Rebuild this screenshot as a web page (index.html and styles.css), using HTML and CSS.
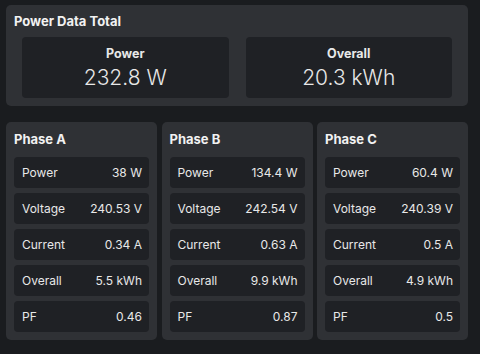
FILE: index.html
```html
<!DOCTYPE html>
<html lang="en">
<head>
    <meta charset="UTF-8">
    <title>Power Data</title>
    <link rel="stylesheet" href="styles.css">
</head>
<body>
<section class="card total">
    <h3 class="card-title">Power Data Total</h3>
    <div class="totals">
        <div class="stat">
            <div class="stat-name">Power</div>
            <div class="stat-value">232.8 W</div>
        </div>
        <div class="stat">
            <div class="stat-name">Overall</div>
            <div class="stat-value">20.3 kWh</div>
        </div>
    </div>
</section>

<div class="phases">
    <section class="card phase">
        <h3 class="card-title">Phase A</h3>
        <div class="row"><span>Power</span><span>38 W</span></div>
        <div class="row"><span>Voltage</span><span>240.53 V</span></div>
        <div class="row"><span>Current</span><span>0.34 A</span></div>
        <div class="row"><span>Overall</span><span>5.5 kWh</span></div>
        <div class="row"><span>PF</span><span>0.46</span></div>
    </section>
    <section class="card phase">
        <h3 class="card-title">Phase B</h3>
        <div class="row"><span>Power</span><span>134.4 W</span></div>
        <div class="row"><span>Voltage</span><span>242.54 V</span></div>
        <div class="row"><span>Current</span><span>0.63 A</span></div>
        <div class="row"><span>Overall</span><span>9.9 kWh</span></div>
        <div class="row"><span>PF</span><span>0.87</span></div>
    </section>
    <section class="card phase">
        <h3 class="card-title">Phase C</h3>
        <div class="row"><span>Power</span><span>60.4 W</span></div>
        <div class="row"><span>Voltage</span><span>240.39 V</span></div>
        <div class="row"><span>Current</span><span>0.5 A</span></div>
        <div class="row"><span>Overall</span><span>4.9 kWh</span></div>
        <div class="row"><span>PF</span><span>0.5</span></div>
    </section>
</div>
</body>
</html>
```

FILE: styles.css
```css
body {
    margin: 0;
    padding: 5px 12px 0 6px;
    background-color: #1a1c1f;
    font-family: Inter, "Noto Sans", sans-serif;
    color: #e8e8e8;
}

.card {
    background-color: #2f3135;
    border-radius: 5px;
    padding: 8px;
}

.card-title {
    margin: 0;
    font-size: 13px;
    font-weight: 700;
    line-height: 16px;
    color: #f2f2f2;
}

.totals {
    display: grid;
    grid-template-columns: 1fr 1fr;
    gap: 17px;
    padding: 0 8px;
    margin-top: 8px;
}

.stat {
    background-color: #1f2125;
    border-radius: 4px;
    height: 61px;
    text-align: center;
    padding-top: 9px;
    box-sizing: border-box;
}

.stat-name {
    font-size: 12.5px;
    font-weight: 700;
    line-height: 16px;
}

.stat-value {
    font-size: 21px;
    font-weight: 300;
    line-height: 26px;
    margin-top: 3px;
}

.phases {
    display: grid;
    grid-template-columns: repeat(3, 1fr);
    gap: 4.5px;
    margin-top: 16px;
}

.phase .card-title {
    line-height: 18px;
    margin-bottom: 9px;
}

.row {
    display: flex;
    justify-content: space-between;
    align-items: center;
    height: 31px;
    padding: 0 7px 0 8px;
    margin-top: 5px;
    background-color: #1f2125;
    border-radius: 4px;
    font-size: 12px;
}

.phase .card-title + .row {
    margin-top: 0;
}
```
